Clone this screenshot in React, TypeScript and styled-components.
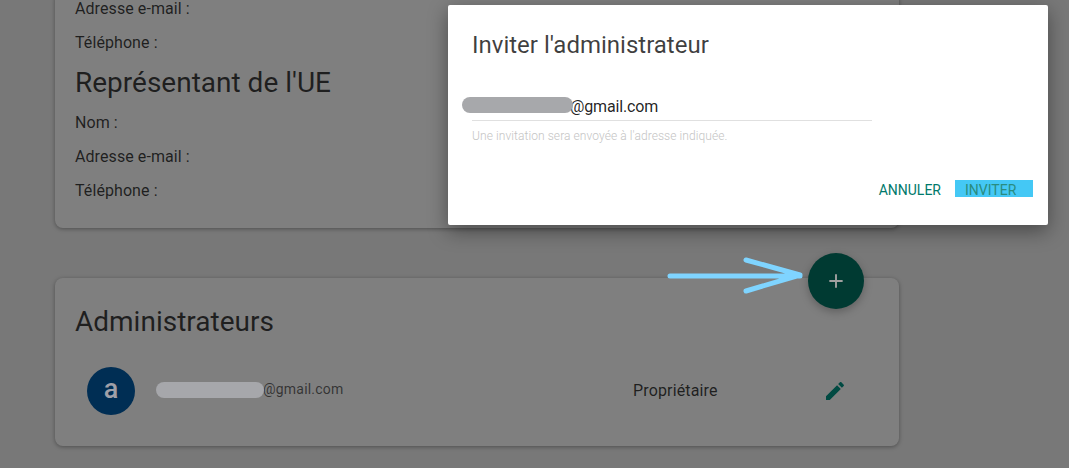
import React from "react";
import styled, { createGlobalStyle } from "styled-components";

const GlobalStyle = createGlobalStyle`
    html, body {
        margin: 0;
        height: 100%;
        overflow: hidden;
        background: #f0f0f0;
        font-family: Roboto, "Liberation Sans", sans-serif;
    }
`;

const EDIT_PATH = "M3 17.25V21h3.75L17.81 9.94l-3.75-3.75L3 17.25zM20.71 7.04c.39-.39.39-1.02 0-1.41l-2.34-2.34c-.39-.39-1.02-.39-1.41 0l-1.83 1.83 3.75 3.75 1.83-1.83z";

const Page = styled.div`
    position: relative;
    width: 1069px;
    height: 468px;
    overflow: hidden;
    box-sizing: border-box;
    padding-left: 55px;
`;

const Card = styled.section`
    position: relative;
    width: 844px;
    box-sizing: border-box;
    padding: 0 20px;
    background: #ffffff;
    border-radius: 8px;
    box-shadow: 0 1px 4px rgba(0, 0, 0, 0.35);
`;

const CompanyCard = styled(Card)`
    margin-top: -8px;
    height: 236px;
`;

const AdminCard = styled(Card)`
    margin-top: 50px;
    height: 168px;
    padding-top: 25px;
`;

const Field = styled.div`
    height: 34px;
    line-height: 34px;
    font-size: 16px;
    letter-spacing: 0.08px;
    color: rgba(0, 0, 0, 0.76);
`;

const SectionTitle = styled.h2`
    margin: 0;
    font-size: 28px;
    font-weight: 400;
    line-height: 38px;
    color: rgba(0, 0, 0, 0.76);
`;

const CompanyTitle = styled(SectionTitle)`
    margin: 4px 0 4px;
`;

const AdminRow = styled.div`
    display: grid;
    grid-template-columns: 69px 477px 190px 1fr;
    align-items: center;
    height: 48px;
    margin: 26px 0 0 12px;
`;

const Avatar = styled.div`
    position: relative;
    z-index: 11;
    width: 48px;
    height: 48px;
    border-radius: 50%;
    background: #002e54;
    color: #a0a0a8;
    font-size: 27px;
    font-weight: 500;
    line-height: 44px;
    text-align: center;
`;

const AdminEmail = styled.div`
    position: relative;
    padding: 0 0 4px 107px;
    font-size: 14px;
    letter-spacing: 0.2px;
    color: rgba(0, 0, 0, 0.6);
`;

const Role = styled.div`
    padding-bottom: 2px;
    font-size: 16px;
    letter-spacing: 0.15px;
    color: rgba(0, 0, 0, 0.76);
`;

const EditIcon = styled.svg`
    position: relative;
    z-index: 11;
    display: block;
    width: 24px;
    height: 24px;
    fill: #004a42;
`;

const Fab = styled.button`
    position: absolute;
    left: 808px;
    top: 253px;
    z-index: 11;
    display: flex;
    align-items: center;
    justify-content: center;
    width: 56px;
    height: 56px;
    padding: 0;
    border: 0;
    border-radius: 50%;
    background: #003a32;
    box-shadow: 0 3px 8px rgba(0, 0, 0, 0.25);
`;

const PlusIcon = styled.svg`
    display: block;
    width: 24px;
    height: 24px;
    fill: #a0a0a0;
`;

const Backdrop = styled.div`
    position: absolute;
    inset: 0;
    z-index: 10;
    background: rgba(0, 0, 0, 0.5);
`;

const Dialog = styled.div`
    position: absolute;
    left: 448px;
    top: 5px;
    z-index: 15;
    display: flex;
    flex-direction: column;
    width: 600px;
    height: 220px;
    box-sizing: border-box;
    padding: 24px 15px 28px 24px;
    background: #ffffff;
    border-radius: 2px;
    box-shadow: 0 6px 20px rgba(0, 0, 0, 0.4);
`;

const DialogTitle = styled.h3`
    margin: 0;
    font-size: 24px;
    font-weight: 400;
    line-height: 32px;
    color: rgba(0, 0, 0, 0.76);
`;

const InputBox = styled.div`
    position: relative;
    width: 400px;
    height: 26px;
    margin-top: 34px;
    box-sizing: border-box;
    padding-left: 98px;
    border-bottom: 1px solid #e0e0e0;
    font-size: 16px;
    letter-spacing: -0.15px;
    line-height: 24px;
    color: rgba(0, 0, 0, 0.87);
`;

const Helper = styled.div`
    margin-top: 8px;
    font-size: 12px;
    font-weight: 300;
    letter-spacing: 0.08px;
    line-height: 14px;
    color: #c4c4c4;
`;

const DialogActions = styled.div`
    display: flex;
    justify-content: flex-end;
    align-items: center;
    gap: 14px;
    margin-top: auto;
`;

const TextButton = styled.button<{ $marked?: boolean }>`
    width: ${({ $marked }) => ($marked ? "78px" : "auto")};
    height: 17px;
    padding: ${({ $marked }) => ($marked ? "4px 0 0 10px" : "4px 0 0")};
    border: 0;
    background: ${({ $marked }) => ($marked ? "#44c8f5" : "transparent")};
    color: ${({ $marked }) => ($marked ? "#2a8c80" : "#00796b")};
    font-family: inherit;
    font-size: 14px;
    line-height: 13px;
    text-align: left;
`;

const Redaction = styled.span<{ $tone: string; $left: number; $width: number }>`
    position: absolute;
    left: ${({ $left }) => $left}px;
    top: 2px;
    z-index: 20;
    width: ${({ $width }) => $width}px;
    height: 16px;
    border-radius: 8px;
    background: ${({ $tone }) => $tone};
`;

const AdminEmailMark = styled(Redaction)`
    top: 1px;
`;

const ArrowMark = styled.svg`
    position: absolute;
    left: 660px;
    top: 250px;
    z-index: 20;
    width: 150px;
    height: 50px;
    fill: none;
    stroke: #7fd4ff;
    stroke-width: 5;
    stroke-linecap: round;
    stroke-linejoin: round;
`;

const App = () => {
    return (
        <>
            <GlobalStyle />
            <Page>
                <CompanyCard>
                    <Field>Adresse e-mail :</Field>
                    <Field>Téléphone :</Field>
                    <CompanyTitle>Représentant de l'UE</CompanyTitle>
                    <Field>Nom :</Field>
                    <Field>Adresse e-mail :</Field>
                    <Field>Téléphone :</Field>
                </CompanyCard>

                <AdminCard>
                    <SectionTitle>Administrateurs</SectionTitle>
                    <AdminRow>
                        <Avatar>a</Avatar>
                        <AdminEmail>
                            <AdminEmailMark $tone="#a6a7ab" $left={0} $width={108} />
                            @gmail.com
                        </AdminEmail>
                        <Role>Propriétaire</Role>
                        <EditIcon viewBox="0 0 24 24">
                            <path d={EDIT_PATH} />
                        </EditIcon>
                    </AdminRow>
                </AdminCard>

                <Fab aria-label="Ajouter">
                    <PlusIcon viewBox="0 0 24 24">
                        <path d="M19 13h-6v6h-2v-6H5v-2h6V5h2v6h6v2z" transform="translate(12 12) scale(0.95 0.95) translate(-12 -12)" />
                    </PlusIcon>
                </Fab>

                <Backdrop />

                <Dialog>
                    <DialogTitle>Inviter l'administrateur</DialogTitle>
                    <InputBox>
                        <Redaction $tone="#a7a8ab" $left={-10} $width={111} />
                        @gmail.com
                    </InputBox>
                    <Helper>Une invitation sera envoyée à l'adresse indiquée.</Helper>
                    <DialogActions>
                        <TextButton>ANNULER</TextButton>
                        <TextButton $marked>INVITER</TextButton>
                    </DialogActions>
                </Dialog>

                <ArrowMark viewBox="0 0 150 50">
                    <path d="M10 26H140M86 10L140 25L86 41" />
                </ArrowMark>
            </Page>
        </>
    );
};

export default App;
